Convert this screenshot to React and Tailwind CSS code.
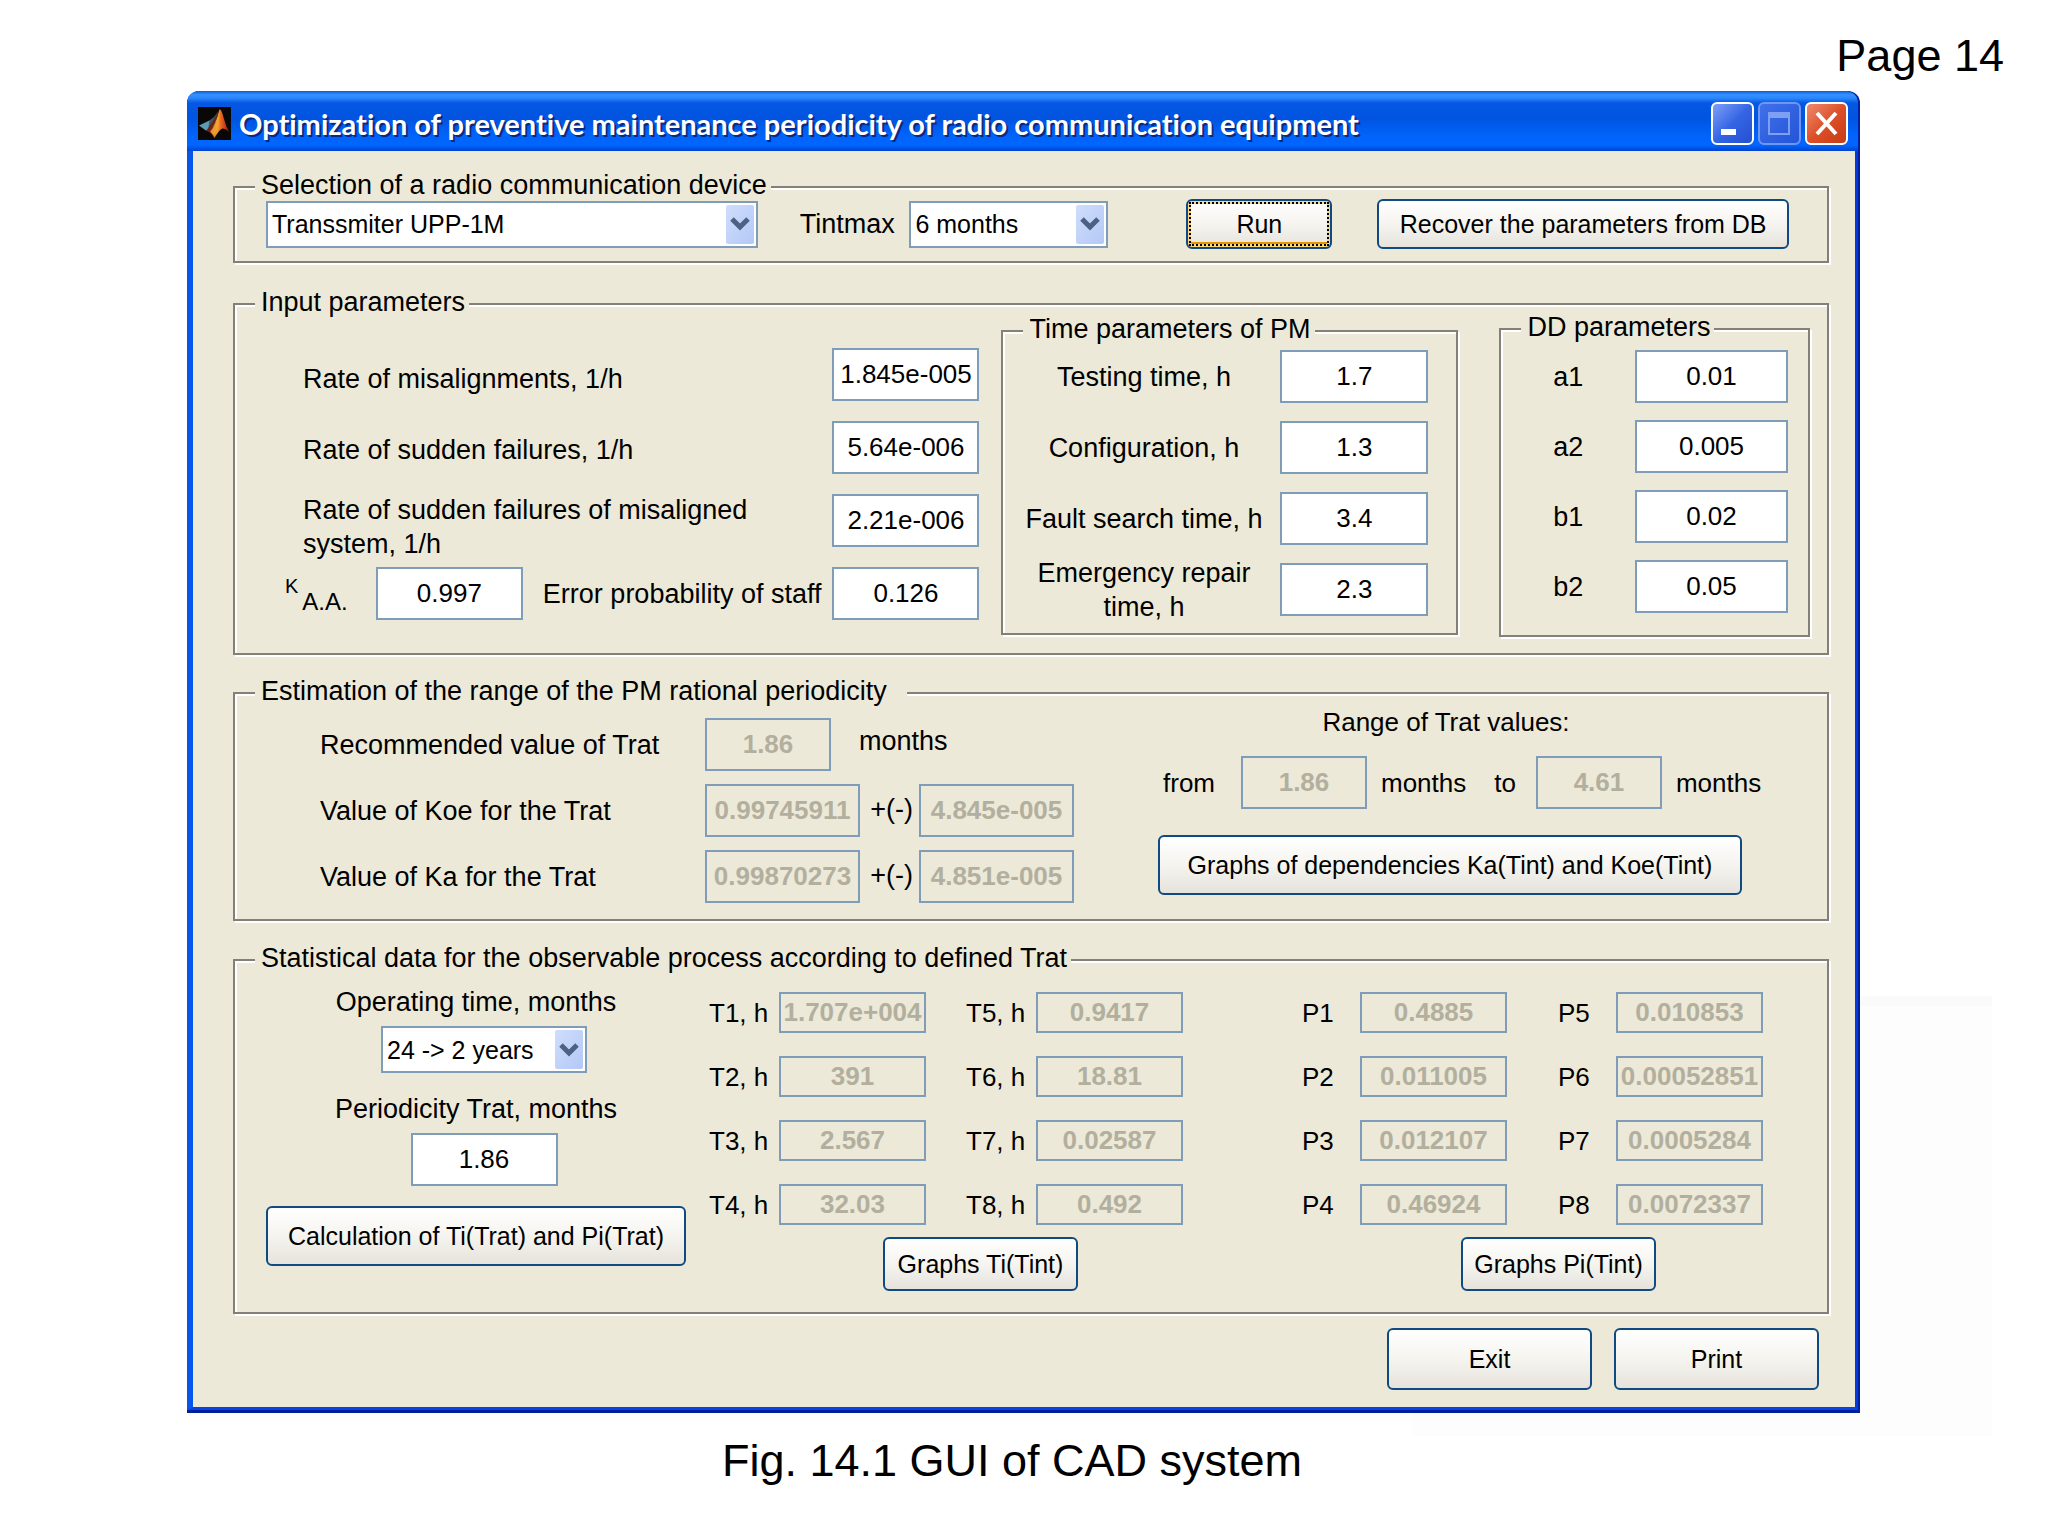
import React, { useId } from "react";

function Group({ title, className = "", legendClass = "pr-1", children }) {
  return (
    <fieldset
      className={`min-w-0 border-2 border-[#848078] shadow-[2px_2px_0_#fff,inset_2px_2px_0_#fff] ${className}`}
    >
      <legend className={`ml-5 whitespace-nowrap bg-[#ece9d8] pb-1 pl-1.5 leading-5 ${legendClass}`}>{title}</legend>
      {children}
    </fieldset>
  );
}

function Field({ className = "", ...props }) {
  return (
    <input
      type="text"
      className={`min-w-0 rounded-none border-2 border-[#7f9db9] bg-white p-0 text-center text-[26px] text-black disabled:bg-[#ece9d8] disabled:font-bold disabled:text-[#b3af9e] ${className}`}
      {...props}
    />
  );
}

function Button({ className = "", children, ...props }) {
  return (
    <button
      type="button"
      className={`whitespace-nowrap rounded-md border-2 border-[#0f4a80] bg-linear-to-b from-white via-[#f5f4ef] to-[#e6e3dc] text-[25px] text-black ${className}`}
      {...props}
    >
      {children}
    </button>
  );
}

function Dropdown({ value, className = "", ...props }) {
  return (
    <span className={`relative block min-w-0 ${className}`}>
      <select
        defaultValue={value}
        className="h-[47px] w-full appearance-none rounded-none border-2 border-[#7f9db9] bg-white pl-1 pr-8 text-[25px] text-black"
        {...props}
      >
        <option>{value}</option>
      </select>
      <span className="pointer-events-none absolute bottom-1 right-1 top-1 flex w-7 items-center justify-center rounded-xs bg-linear-to-br from-[#d0defc] to-[#b3c8f6]">
        <svg viewBox="0 0 20 16" className="h-4 w-5" fill="none" stroke="#4d6185" strokeWidth="5">
          <path d="M2 3 L10 11 L18 3" />
        </svg>
      </span>
    </span>
  );
}

function RateRow({ label, value, labelClass = "pt-1" }) {
  const id = useId();
  return (
    <div className="flex h-[53px] items-center justify-between pl-[68px]">
      <label htmlFor={id} className={`-my-4 w-[450px] leading-[34px] ${labelClass}`}>
        {label}
      </label>
      <Field id={id} defaultValue={value} className="h-full w-[147px]" />
    </div>
  );
}

function CenteredRow({ label, value, inputClass }) {
  const id = useId();
  return (
    <div className="flex h-[53px] items-center">
      <label htmlFor={id} className="-my-4 flex-1 text-center leading-[34px]">
        {label}
      </label>
      <Field id={id} defaultValue={value} className={`h-full ${inputClass}`} />
    </div>
  );
}

function Estimate({ label, value, error }) {
  const id = useId();
  return (
    <div className="flex h-[53px] items-center">
      <label htmlFor={id} className="w-[385px]">
        {label}
      </label>
      {error ? (
        <>
          <Field id={id} disabled defaultValue={value} className="h-full w-[155px]" />
          <span className="w-[59px] pb-1 pl-1 text-center">+(-)</span>
          <Field aria-label={`${label} error`} disabled defaultValue={error} className="h-full w-[155px]" />
        </>
      ) : (
        <>
          <Field id={id} disabled defaultValue={value} className="h-full w-[126px]" />
          <span className="pb-2 pl-7">months</span>
        </>
      )}
    </div>
  );
}

function Stat({ label, value }) {
  const id = useId();
  return (
    <div className="flex items-center justify-between">
      <label htmlFor={id} className="whitespace-nowrap">
        {label}
      </label>
      <Field id={id} disabled defaultValue={value} className="h-[41px] w-[147px]" />
    </div>
  );
}

const timeStats = [
  ["T1, h", "1.707e+004"],
  ["T2, h", "391"],
  ["T3, h", "2.567"],
  ["T4, h", "32.03"],
  ["T5, h", "0.9417"],
  ["T6, h", "18.81"],
  ["T7, h", "0.02587"],
  ["T8, h", "0.492"],
];

const probabilityStats = [
  ["P1", "0.4885"],
  ["P2", "0.011005"],
  ["P3", "0.012107"],
  ["P4", "0.46924"],
  ["P5", "0.010853"],
  ["P6", "0.00052851"],
  ["P7", "0.0005284"],
  ["P8", "0.0072337"],
];

function AppLogo() {
  return (
    <svg viewBox="0 0 32 32" className="h-[33px] w-[33px] shrink-0" aria-hidden="true">
      <defs>
        <linearGradient id="peak" x1="0" x2="1">
          <stop offset="0" stopColor="#8a2410" />
          <stop offset="0.4" stopColor="#f0a030" />
          <stop offset="0.6" stopColor="#ea6420" />
          <stop offset="1" stopColor="#a01c10" />
        </linearGradient>
      </defs>
      <rect width="32" height="32" fill="#0a0806" />
      <path d="M1 18 L7 15 L11 13 L14 14 L12 20 L8 23 Z" fill="#5b9cb4" />
      <path d="M11 13 Q16 10 20 4 L15 19 L10 22 Z" fill="#3c5868" />
      <path d="M8 23 L14 14 Q17 10 20 3 L16 20 L12 25 Z" fill="#6a2418" />
      <path d="M21 2 Q23 3 25 11 Q27 19 30 24 Q26 20 23 21 Q20 23 16 30 Q14 26 11 24 Q17 18 21 2 Z" fill="url(#peak)" />
      <path d="M21 3 L20 18 L16 28 L12 24 Q18 18 21 3 Z" fill="#f4a832" opacity="0.8" />
    </svg>
  );
}

function TitleBar() {
  return (
    <header className="flex h-[60px] items-center justify-between rounded-t-xl bg-[linear-gradient(to_bottom,#0a5be0_0%,#3590ff_6%,#2a86fb_12%,#0658e4_20%,#0054e0_45%,#0064fb_75%,#0066ff_90%,#0043cf_100%)] pl-[11px] pr-2.5 pt-1">
      <div className="flex items-center gap-2">
        <AppLogo />
        <h1 className="whitespace-nowrap pt-0.5 font-['Lato',sans-serif] text-[29px] font-bold text-white [font-variant-ligatures:none] [text-shadow:2px_2px_0_#0a2a80]">
          Optimization of preventive maintenance periodicity of radio communication equipment
        </h1>
      </div>
      <div className="flex gap-1">
        <button
          type="button"
          aria-label="Minimize"
          className="h-[43px] w-[43px] rounded-md border-2 border-white bg-linear-to-br from-[#7f9ff5] via-[#3565e5] to-[#2350cf]"
        >
          <svg viewBox="0 0 39 39" className="h-full w-full">
            <rect x="8" y="25" width="15" height="6" fill="#fff" />
          </svg>
        </button>
        <button
          type="button"
          aria-label="Maximize"
          disabled
          className="h-[43px] w-[43px] rounded-md border-2 border-[#6f97f2] bg-linear-to-br from-[#4070ea] to-[#2454d8]"
        >
          <svg viewBox="0 0 39 39" className="h-full w-full">
            <rect x="9" y="9" width="20" height="21" fill="none" stroke="#7f9ff2" strokeWidth="2" />
            <rect x="8" y="8" width="22" height="6" fill="#7f9ff2" />
          </svg>
        </button>
        <button
          type="button"
          aria-label="Close"
          className="h-[43px] w-[43px] rounded-md border-2 border-white bg-linear-to-br from-[#ee8a6c] via-[#dd4f27] to-[#c53c14]"
        >
          <svg viewBox="0 0 39 39" className="h-full w-full">
            <path d="M10 9 L29 30 M29 9 L10 30" stroke="#fff" strokeWidth="4" />
          </svg>
        </button>
      </div>
    </header>
  );
}

export default function App() {
  return (
    <div className="relative isolate min-h-screen bg-white font-['Liberation_Sans',Arial,sans-serif] text-[27px] leading-8 text-black">
      <div className="absolute right-14 top-[996px] -z-10 h-[440px] w-[580px] border-t-[10px] border-[#fafafa] bg-[#fdfdfd]" />
      <p className="flex h-[91px] items-center justify-end pl-4 pr-11 pt-5 text-[45px]">Page 14</p>

      <main className="ml-[187px] mr-[188px] rounded-t-xl bg-[#001ea0] pb-[3px] pr-0.5">
        <TitleBar />
        <div className="border-b-[3px] border-l-[6px] border-r-[3px] border-b-[#0845e0] border-l-[#0855ea] border-r-[#0838d8] bg-[#ece9d8] pb-[17px] pl-10 pr-[26px] pt-6">
          <Group title="Selection of a radio communication device" className="pb-3">
            <div className="flex items-center pl-[31px] pr-[38px]">
              <Dropdown
                aria-label="Radio communication device"
                value="Transsmiter UPP-1M"
                className="mr-[42px] flex-[492]"
              />
              <div className="mr-[78px] flex flex-[309] items-center justify-between gap-3">
                <label htmlFor="tintmax">Tintmax</label>
                <Dropdown id="tintmax" value="6 months" className="w-[199px]" />
              </div>
              <Button className="mr-[45px] h-[50px] flex-[140] p-px shadow-[inset_0_0_0_3px_#fbd684,inset_0_-5px_0_#e59700]">
                <span className="flex h-full items-center justify-center border-2 border-dotted border-black">Run</span>
              </Button>
              <Button className="h-[50px] flex-[408]">Recover the parameters from DB</Button>
            </div>
          </Group>

          <Group title="Input parameters" className="mt-[29px] pb-4">
            <div className="flex items-start pr-[17px]">
              <div className="mr-[22px] flex flex-[743] flex-col gap-5 pt-8">
                <RateRow label="Rate of misalignments, 1/h" value="1.845e-005" labelClass="pt-2" />
                <RateRow label="Rate of sudden failures, 1/h" value="5.64e-006" />
                <RateRow
                  label="Rate of sudden failures of misaligned system, 1/h"
                  value="2.21e-006"
                  labelClass="pt-3"
                />
                <div className="flex h-[53px] items-center pl-[50px]">
                  <label htmlFor="kaa" className="flex h-8 flex-1">
                    <span className="-mt-2 text-[20px]">K</span>
                    <span className="mt-2 pl-1 text-[24px]">A.A.</span>
                  </label>
                  <Field id="kaa" defaultValue="0.997" className="mr-5 h-full w-[147px]" />
                  <label htmlFor="staff" className="mr-[11px] whitespace-nowrap">
                    Error probability of staff
                  </label>
                  <Field id="staff" defaultValue="0.126" className="h-full w-[147px]" />
                </div>
              </div>

              <Group title="Time parameters of PM" className="mr-[41px] mt-[3px] flex-[452] pb-[17px]">
                <div className="flex flex-col gap-[18px] pl-1 pr-7 pt-[7px]">
                  <CenteredRow label="Testing time, h" value="1.7" inputClass="w-[148px]" />
                  <CenteredRow label="Configuration, h" value="1.3" inputClass="w-[148px]" />
                  <CenteredRow label="Fault search time, h" value="3.4" inputClass="w-[148px]" />
                  <CenteredRow
                    label={
                      <>
                        Emergency repair
                        <br />
                        time, h
                      </>
                    }
                    value="2.3"
                    inputClass="w-[148px]"
                  />
                </div>
              </Group>

              <Group title="DD parameters" className="mt-px flex-[306] pb-[22px]">
                <div className="flex flex-col gap-[17px] pr-5 pt-[9px]">
                  <CenteredRow label="a1" value="0.01" inputClass="w-[153px]" />
                  <CenteredRow label="a2" value="0.005" inputClass="w-[153px]" />
                  <CenteredRow label="b1" value="0.02" inputClass="w-[153px]" />
                  <CenteredRow label="b2" value="0.05" inputClass="w-[153px]" />
                </div>
              </Group>
            </div>
          </Group>

          <Group
            title="Estimation of the range of the PM rational periodicity"
            legendClass="pr-5"
            className="mt-[26px] pb-4"
          >
            <div className="flex items-start justify-between pl-[85px] pr-[61px] pt-[13px]">
              <div className="flex flex-col gap-[13px]">
                <Estimate label="Recommended value of Trat" value="1.86" />
                <Estimate label="Value of Koe for the Trat" value="0.99745911" error="4.845e-005" />
                <Estimate label="Value of Ka for the Trat" value="0.99870273" error="4.851e-005" />
              </div>
              <div className="w-[608px] text-[26px]">
                <p className="-mt-3 pr-8 text-center">Range of Trat values:</p>
                <div className="mt-[18px] flex h-[53px] items-center pl-[5px]">
                  <label htmlFor="range-from">from</label>
                  <Field id="range-from" disabled defaultValue="1.86" className="ml-[26px] h-full w-[126px]" />
                  <span className="ml-3.5">months</span>
                  <label htmlFor="range-to" className="ml-7">
                    to
                  </label>
                  <Field id="range-to" disabled defaultValue="4.61" className="ml-5 h-full w-[126px]" />
                  <span className="ml-3.5">months</span>
                </div>
                <Button className="mt-[26px] h-[60px] w-[584px]">Graphs of dependencies Ka(Tint) and Koe(Tint)</Button>
              </div>
            </div>
          </Group>

          <Group
            title="Statistical data for the observable process according to defined Trat"
            className="mt-[27px] pb-[21px]"
          >
            <div className="flex items-start justify-between pl-[31px] pr-16">
              <div className="flex w-[420px] flex-col items-center pt-3.5">
                <label htmlFor="operating">Operating time, months</label>
                <Dropdown id="operating" value="24 -> 2 years" className="ml-4 mt-2 w-[206px]" />
                <label htmlFor="periodicity" className="mt-5">
                  Periodicity Trat, months
                </label>
                <Field id="periodicity" defaultValue="1.86" className="ml-4 mt-2 h-[53px] w-[147px]" />
                <Button className="mt-5 h-[60px] w-full">Calculation of Ti(Trat) and Pi(Trat)</Button>
              </div>

              <div className="mr-24 w-[474px] pt-5 text-[26px]">
                <div className="grid grid-flow-col grid-cols-[217px_217px] grid-rows-4 justify-between gap-y-[23px]">
                  {timeStats.map(([label, value]) => (
                    <Stat key={label} label={label} value={value} />
                  ))}
                </div>
                <div className="flex justify-center pl-[69px] pt-3">
                  <Button className="h-[54px] w-[195px]">Graphs Ti(Tint)</Button>
                </div>
              </div>

              <div className="w-[461px] pt-5 text-[26px]">
                <div className="grid grid-flow-col grid-cols-[205px_205px] grid-rows-4 justify-between gap-y-[23px]">
                  {probabilityStats.map(([label, value]) => (
                    <Stat key={label} label={label} value={value} />
                  ))}
                </div>
                <div className="flex justify-center pl-[52px] pt-3">
                  <Button className="h-[54px] w-[195px]">Graphs Pi(Tint)</Button>
                </div>
              </div>
            </div>
          </Group>

          <div className="mt-[14px] flex justify-end gap-[22px] pr-2.5">
            <Button className="h-[62px] w-[205px]">Exit</Button>
            <Button className="h-[62px] w-[205px]">Print</Button>
          </div>
        </div>
      </main>

      <p className="pb-4 pr-6 pt-5 text-center text-[45px] leading-[56px]">Fig. 14.1 GUI of CAD system</p>
    </div>
  );
}
